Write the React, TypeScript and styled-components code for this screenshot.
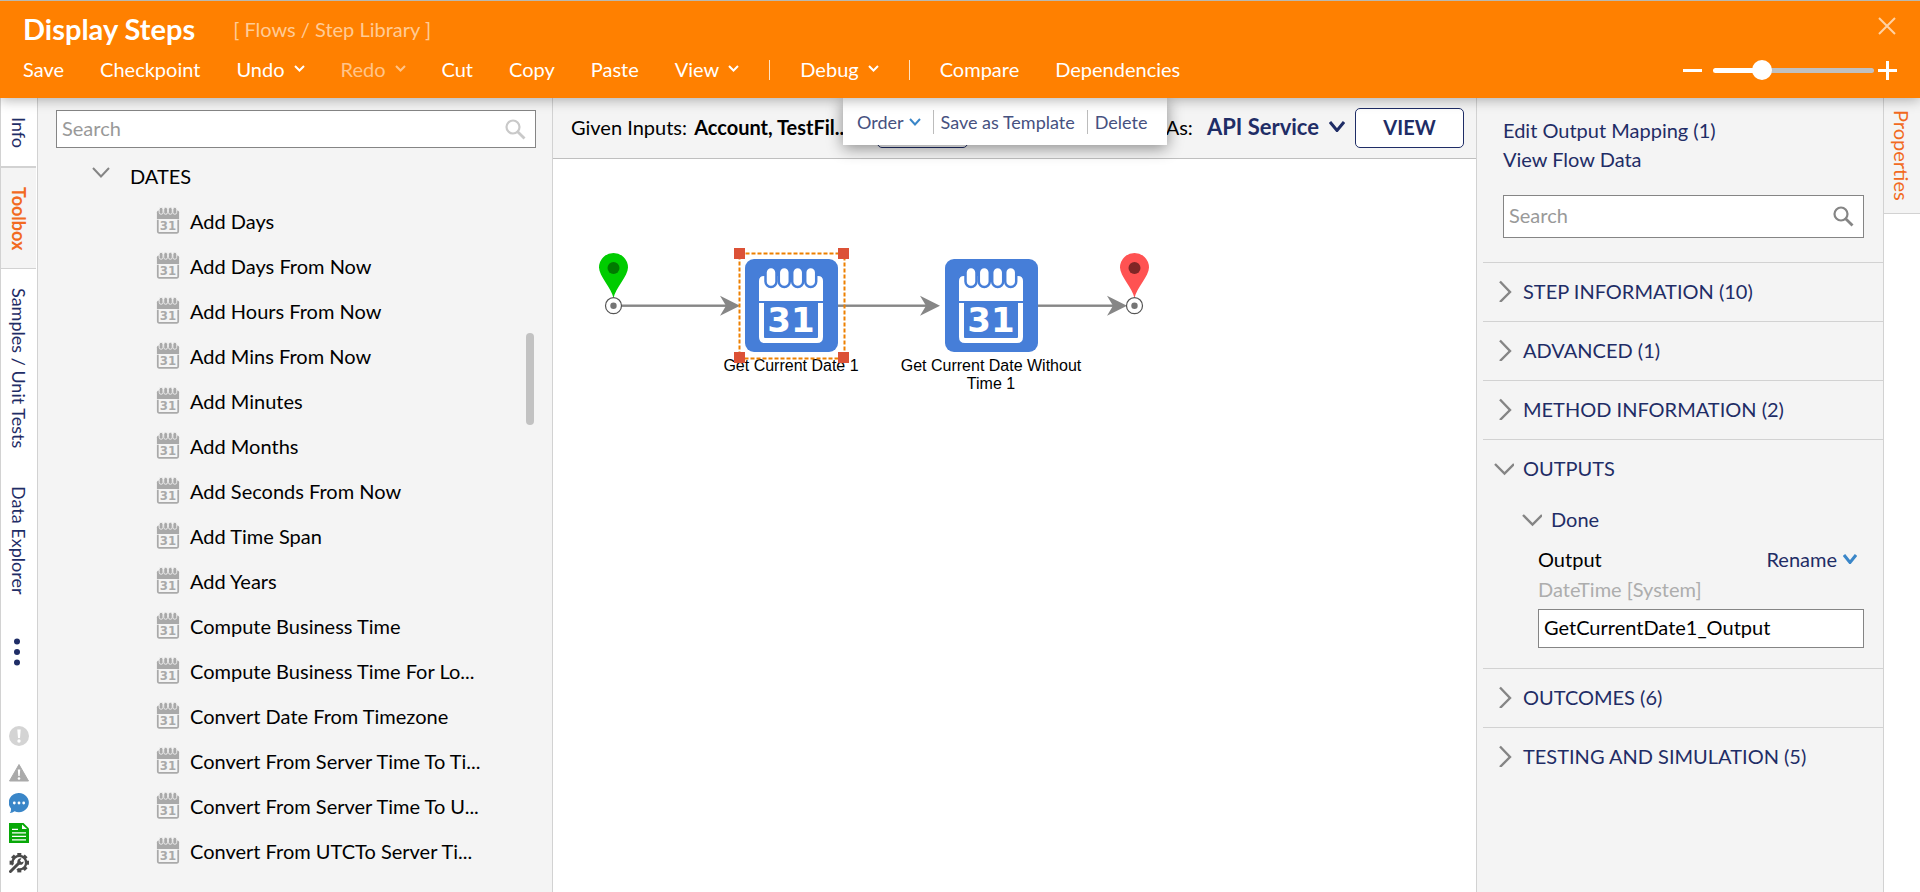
import React from "react";
import styled, { createGlobalStyle, css } from "styled-components";

const navy = "#1f2d66";
const orange = "#ff8000";
const accent = "#f26a21";
const panel = "#f4f4f4";
const line = "#d2d2d2";
const blue = "#3a86c8";
const iconGray = "#858585";

const GlobalStyle = createGlobalStyle`
  *, *::before, *::after { box-sizing: border-box; }
  body {
    margin: 0;
    background: #fff;
    color: #000;
    font: 20px/24px Lato, "Liberation Sans", sans-serif;
  }
  button, input { font: inherit; color: inherit; }
  button { background: none; border: 0; padding: 0; cursor: pointer; }
  a { color: inherit; text-decoration: none; }
  svg { display: block; flex: none; }
`;

const Page = styled.div`
  display: flex;
  flex-direction: column;
  min-height: 100vh;
`;

/* ---------- header ---------- */

const Header = styled.header`
  position: relative;
  z-index: 2;
  padding: 8px 22px 11px 23px;
  border-top: 1px solid #b9b9b0;
  background: ${orange};
  color: #fff;
  box-shadow: 0 2px 12px rgba(0, 0, 0, 0.3);
`;

const TitleRow = styled.div`
  display: flex;
  align-items: center;
  height: 44px;
  padding-bottom: 4px;
`;

const Title = styled.h1`
  margin: 0 38px 0 0;
  font-size: 29px;
  line-height: 34px;
  font-weight: 700;
`;

const Crumb = styled.span`
  color: #ffcb96;
`;

const CloseButton = styled.button`
  margin: 0 2px 6px auto;
`;

const MenuRow = styled.div`
  display: flex;
  align-items: center;
  justify-content: space-between;
  height: 34px;
`;

const Menu = styled.nav`
  display: flex;
  align-items: center;
  gap: 36px;
`;

const MenuButton = styled.button`
  display: flex;
  align-items: center;
  gap: 9px;
  padding-bottom: 3px;
  &:disabled {
    color: #ffc48a;
    cursor: default;
  }
`;

const MenuDivider = styled.span`
  width: 1px;
  height: 20px;
  margin: 0 -6px;
  background: #ffe2c4;
`;

const Zoom = styled.div`
  display: flex;
  align-items: center;
`;

const Range = styled.input`
  appearance: none;
  width: 161px;
  height: 20px;
  margin: 0 4px 0 10px;
  background: transparent;
  &::-webkit-slider-runnable-track {
    height: 5px;
    border-radius: 3px;
    background: linear-gradient(to right, #fff 31%, #c0c0c0 31%);
  }
  &::-webkit-slider-thumb {
    appearance: none;
    width: 20px;
    height: 20px;
    margin-top: -8px;
    border-radius: 50%;
    background: #fff;
  }
`;

/* ---------- body ---------- */

const Body = styled.div`
  display: flex;
  flex: 1;
`;

const Rail = styled.nav`
  display: flex;
  flex-direction: column;
  width: 38px;
  padding-right: 1px;
  border: solid ${line};
  border-width: 0 1px;
`;

const sideText = css`
  writing-mode: vertical-rl;
  text-align: left;
`;

const RailTab = styled.button<{ $active?: boolean; $rule?: number }>`
  ${sideText}
  width: 35px;
  padding: 19px 0 18px;
  font-size: 18px;
  line-height: 31px;
  color: ${(p) => (p.$active ? accent : navy)};
  font-weight: ${(p) => (p.$active ? 700 : 400)};
  background: ${(p) => (p.$active ? panel : "transparent")};
  border-bottom: ${(p) => p.$rule ?? 0}px solid ${line};
`;

const MoreButton = styled.button`
  margin: 26px 0 0 13px;
  align-self: flex-start;
`;

const StatusList = styled.div`
  display: flex;
  flex-direction: column;
  align-items: center;
  gap: 10px;
  margin-top: auto;
  padding-bottom: 19px;
  button:first-child { margin-bottom: 7px; }
`;

const Toolbox = styled.aside`
  position: relative;
  width: 515px;
  padding: 12px 16px 18px 18px;
  background: ${panel};
  border-right: 1px solid ${line};
`;

const SearchBox = styled.label<{ $tall?: boolean }>`
  display: flex;
  align-items: center;
  height: ${(p) => (p.$tall ? 43 : 38)}px;
  padding: 0 9px 0 5px;
  background: #fff;
  border: 1px solid ${iconGray};
  input {
    flex: 1;
    min-width: 0;
    padding: 0 0 3px;
    border: 0;
    outline: 0;
    background: transparent;
  }
  input::placeholder { color: #999; opacity: 1; }
`;

const CategoryButton = styled.button`
  display: flex;
  align-items: center;
  gap: 20px;
  height: 45px;
  margin: 5px 0 0 36px;
  svg { margin-bottom: 7px; }
`;

const StepList = styled.ul`
  margin: 0;
  padding: 0 0 0 100px;
  list-style: none;
`;

const StepButton = styled.button`
  display: flex;
  align-items: center;
  gap: 10px;
  height: 45px;
  white-space: nowrap;
`;

const ScrollThumb = styled.div`
  position: absolute;
  top: 235px;
  right: 18px;
  width: 8px;
  height: 92px;
  border-radius: 4px;
  background: #c2c2c2;
`;

/* ---------- designer ---------- */

const Designer = styled.main`
  display: flex;
  flex-direction: column;
  flex: 1;
  min-width: 0;
  position: relative;
`;

const FlowBar = styled.div`
  display: flex;
  align-items: center;
  height: 61px;
  padding: 0 12px 0 18px;
  background: ${panel};
  border-bottom: 1px solid #bfbfbf;
  white-space: nowrap;
`;

const Inputs = styled.div`
  flex: 0 0 306px;
  overflow: hidden;
  padding-bottom: 3px;
  strong { margin-left: 2px; }
`;

const OutlineButton = styled.button<{ $w: number }>`
  width: ${(p) => p.$w}px;
  height: 40px;
  padding-bottom: 3px;
  border: 1px solid ${navy};
  border-radius: 5px;
  background: #fff;
  color: ${navy};
  font-weight: 700;
`;

const RunAs = styled.div`
  display: flex;
  align-items: center;
  gap: 10px;
  margin-left: auto;
`;

const RunAsLabel = styled.span`
  padding-bottom: 3px;
`;

const RunAsButton = styled.button`
  display: flex;
  align-items: center;
  gap: 10px;
  margin-left: 4px;
  padding-bottom: 3px;
  color: ${navy};
  font-size: 22px;
  font-weight: 700;
`;

const StepMenu = styled.div`
  position: absolute;
  z-index: 1;
  top: 0;
  left: 290px;
  display: flex;
  align-items: center;
  width: 324px;
  height: 47px;
  padding: 0 14px;
  gap: 7px;
  background: #fff;
  color: #46517f;
  font-size: 18px;
  white-space: nowrap;
  box-shadow: 0 3px 16px rgba(0, 0, 0, 0.45);
`;

const StepMenuButton = styled.button`
  display: flex;
  align-items: center;
  gap: 5px;
`;

const StepMenuDivider = styled.span`
  width: 1px;
  height: 24px;
  margin-left: 5px;
  background: #bcbcbc;
`;

const Canvas = styled.div`
  position: relative;
  flex: 1;
  overflow: hidden;
  background: #fff;
`;

const Wires = styled.svg`
  position: absolute;
  top: 0;
  left: 0;
`;

const Node = styled.div<{ $x: number; $y: number }>`
  position: absolute;
  left: ${(p) => p.$x}px;
  top: ${(p) => p.$y}px;
  display: flex;
  flex-direction: column;
  align-items: center;
  gap: 5px;
  width: 200px;
  font: 16px/18px "Liberation Sans", Arial, sans-serif;
  text-align: center;
`;

const Selection = styled.svg`
  position: absolute;
  top: -11px;
  left: 43px;
`;

/* ---------- properties ---------- */

const Properties = styled.aside`
  width: 408px;
  padding: 18px 0 0 6px;
  background: ${panel};
  border: solid ${line};
  border-width: 0 1px;
  color: ${navy};
`;

const Links = styled.div`
  display: flex;
  flex-direction: column;
  align-items: flex-start;
  margin-left: 20px;
  line-height: 29px;
`;

const PropertySearch = styled.div`
  margin: 21px 19px 24px 20px;
`;

const Section = styled.section`
  border-top: 1px solid ${line};
`;

const SectionButton = styled.button`
  display: flex;
  align-items: center;
  gap: 9px;
  width: 100%;
  height: 58px;
  padding: 0 0 3px 11px;
`;

const GroupButton = styled(SectionButton)`
  height: 44px;
  padding-left: 39px;
`;

const Field = styled.div`
  display: flex;
  flex-direction: column;
  margin: 2px 19px 20px 55px;
`;

const FieldHead = styled.div`
  display: flex;
  justify-content: space-between;
  align-items: center;
  height: 30px;
  padding-right: 7px;
  label { color: #000; }
`;

const RenameButton = styled.button`
  display: flex;
  align-items: center;
  gap: 6px;
`;

const FieldType = styled.span`
  height: 35px;
  line-height: 31px;
  color: #adadad;
`;

const TextInput = styled.input`
  height: 39px;
  padding: 0 5px 3px;
  border: 1px solid ${iconGray};
  border-radius: 0;
  background: #fff;
  color: #000;
`;

const RightRail = styled.nav`
  width: 36px;
`;

const PropertiesTab = styled.button`
  ${sideText}
  width: 36px;
  padding: 12px 0;
  line-height: 34px;
  background: ${panel};
  color: ${accent};
  border-bottom: 1px solid ${line};
`;

/* ---------- icons ---------- */

const Chevron = ({ w = 11, h = 7, color = "currentColor", stroke = 2 }) => (
  <svg width={w} height={h} viewBox={`0 0 ${w} ${h}`} fill="none" stroke={color} strokeWidth={stroke}>
    <path d={`M1 1L${w / 2} ${h - 1.5}L${w - 1} 1`} />
  </svg>
);

const SectionChevron = ({ open }: { open?: boolean }) => (
  <svg width="20" height="22" viewBox="0 0 20 22" fill="none" stroke={iconGray} strokeWidth="2.4">
    <path d={open ? "M1 7L10.500 16.500L20 7" : "M6 1.500L16 12L6 22"} />
  </svg>
);

const SearchIcon = ({ color }: { color: string }) => (
  <svg width="21" height="21" viewBox="0 0 21 21" fill="none" stroke={color}>
    <circle cx="8" cy="8" r="6.500" strokeWidth="2.200" />
    <path d="M12.700 12.700L19.500 19.500" strokeWidth="2.800" />
  </svg>
);

const rings = [26, 39.3, 52.7, 65.7];

const CalendarArt = ({ ink, ground }: { ink: string; ground: string }) => (
  <>
    <path d="M14 42V22Q14 17 19 17H73Q78 17 78 22V42Z" fill={ink} />
    <path d="M16.500 44V78Q16.500 81.500 20 81.500H72Q75.500 81.500 75.500 78V44" fill="none" stroke={ink} strokeWidth="5" />
    {rings.map((x) => (
      <rect key={x} x={x - 5.5} y="8" width="11" height="20" rx="5.500" fill={ink} stroke={ground} strokeWidth="2.500" />
    ))}
    <text x="46" y="73" textAnchor="middle" fontFamily="DejaVu Sans, sans-serif" fontWeight="700" fontSize="34" fill={ink}>
      31
    </text>
  </>
);

const SmallCalendar = () => (
  <svg width="24" height="27" viewBox="12 7 68 78">
    <CalendarArt ink="#a9a9a9" ground={panel} />
  </svg>
);

const LargeCalendar = () => (
  <svg width="93" height="93" viewBox="0 0 93 93">
    <rect width="93" height="93" rx="9" fill="#467ed8" />
    <CalendarArt ink="#fff" ground="#467ed8" />
  </svg>
);

const Pin = ({ x, fill, core }: { x: number; fill: string; core: string }) => (
  <g>
    <path
      d={`M${x} 139C${x - 2} 129 ${x - 14.5} 117 ${x - 14.5} 108.500A14.500 14.500 0 0 1 ${x + 14.5} 108.500C${x + 14.5} 117 ${x + 2} 129 ${x} 139Z`}
      fill={fill}
    />
    <circle cx={x} cy="109" r="6" fill={core} />
    <circle cx={x} cy="146.700" r="8" fill="#fff" stroke="#555" strokeWidth="1.200" />
    <circle cx={x} cy="146.700" r="3.200" fill="#757575" />
  </g>
);

const Wire = ({ from, to }: { from: number; to: number }) => (
  <g fill="#868686">
    <rect x={from} y="145.500" width={to - from - 10} height="2.400" />
    <path d={`M${to} 146.700L${to - 20} 136.700L${to - 14} 146.700L${to - 20} 156.700Z`} />
  </g>
);

const steps = [
  "Add Days",
  "Add Days From Now",
  "Add Hours From Now",
  "Add Mins From Now",
  "Add Minutes",
  "Add Months",
  "Add Seconds From Now",
  "Add Time Span",
  "Add Years",
  "Compute Business Time",
  "Compute Business Time For Lo...",
  "Convert Date From Timezone",
  "Convert From Server Time To Ti...",
  "Convert From Server Time To U...",
  "Convert From UTCTo Server Ti...",
];

const Fold = ({ title }: { title: string }) => (
  <Section>
    <SectionButton>
      <SectionChevron />
      {title}
    </SectionButton>
  </Section>
);

const gearTeeth = [0, 45, 90, 135, 180, 225, 270, 315];

export default function App() {
  return (
    <Page>
      <GlobalStyle />
      <Header>
        <TitleRow>
          <Title>Display Steps</Title>
          <Crumb>[ Flows / Step Library ]</Crumb>
          <CloseButton aria-label="Close">
            <svg width="18" height="18" viewBox="0 0 18 18" stroke="#ffd2a4" strokeWidth="2">
              <path d="M1 1L17 17M17 1L1 17" />
            </svg>
          </CloseButton>
        </TitleRow>
        <MenuRow>
          <Menu>
            <MenuButton>Save</MenuButton>
            <MenuButton>Checkpoint</MenuButton>
            <MenuButton>Undo <Chevron /></MenuButton>
            <MenuButton disabled>Redo <Chevron /></MenuButton>
            <MenuButton>Cut</MenuButton>
            <MenuButton>Copy</MenuButton>
            <MenuButton>Paste</MenuButton>
            <MenuButton>View <Chevron /></MenuButton>
            <MenuDivider />
            <MenuButton>Debug <Chevron /></MenuButton>
            <MenuDivider />
            <MenuButton>Compare</MenuButton>
            <MenuButton>Dependencies</MenuButton>
          </Menu>
          <Zoom>
            <button aria-label="Zoom out">
              <svg width="20" height="20" viewBox="0 0 20 20" stroke="#fff" strokeWidth="3">
                <path d="M0 10.500H19" />
              </svg>
            </button>
            <Range type="range" min="0" max="100" defaultValue="28" aria-label="Zoom" />
            <button aria-label="Zoom in">
              <svg width="20" height="20" viewBox="0 0 20 20" stroke="#fff" strokeWidth="3">
                <path d="M0 10.500H19M9.500 1V20" />
              </svg>
            </button>
          </Zoom>
        </MenuRow>
      </Header>

      <Body>
        <Rail>
          <RailTab $rule={2}>Info</RailTab>
          <RailTab $active $rule={1}>Toolbox</RailTab>
          <RailTab>Samples / Unit Tests</RailTab>
          <RailTab>Data Explorer</RailTab>
          <MoreButton aria-label="More">
            <svg width="6" height="28" viewBox="0 0 6 28" fill={navy}>
              <circle cx="3" cy="3.500" r="3" />
              <circle cx="3" cy="14" r="3" />
              <circle cx="3" cy="24.500" r="3" />
            </svg>
          </MoreButton>
          <StatusList>
            <button aria-label="Errors">
              <svg width="20" height="20" viewBox="0 0 20 20">
                <circle cx="10" cy="10" r="10" fill="#d4d4d4" />
                <path d="M8.300 3.500H11.700L11 12H9Z" fill="#fff" />
                <circle cx="10" cy="15" r="1.700" fill="#fff" />
              </svg>
            </button>
            <button aria-label="Warnings">
              <svg width="20" height="20" viewBox="0 0 20 20">
                <path d="M10 1.500L19.500 18H0.500Z" fill="#aaa" stroke="#aaa" strokeLinejoin="round" />
                <path d="M8.800 6.500H11.200L10.700 13H9.300Z" fill="#fff" />
                <circle cx="10" cy="15.500" r="1.300" fill="#fff" />
              </svg>
            </button>
            <button aria-label="Comments">
              <svg width="20" height="20" viewBox="0 0 20 20">
                <path d="M10 0A10 9.600 0 1 1 5.600 18.300Q3.500 20 0.800 20Q2.300 18 2 15.600A10 9.600 0 0 1 10 0Z" fill={blue} />
                <g fill="#fff">
                  <circle cx="5.300" cy="10" r="1.400" />
                  <circle cx="10" cy="10" r="1.400" />
                  <circle cx="14.700" cy="10" r="1.400" />
                </g>
              </svg>
            </button>
            <button aria-label="Documentation">
              <svg width="20" height="20" viewBox="0 0 20 20">
                <path d="M0 0H14.500L20 5.500V20H0Z" fill="#08a808" />
                <path d="M13 1.500V6H18Z" fill="#fff" />
                <path d="M3 6.300H9M3 9.800H17M3 13.300H17M3 16.800H17" stroke="#fff" strokeWidth="1.300" />
              </svg>
            </button>
            <button aria-label="Settings">
              <svg width="20" height="20" viewBox="0 0 20 20">
                <g fill="#4a4a4a">
                  {gearTeeth.map((a) => (
                    <rect key={a} x="8.300" y="0" width="4" height="4" transform={`rotate(${a} 10.300 9.700)`} />
                  ))}
                </g>
                <circle cx="10.300" cy="9.700" r="6.800" fill="#fff" stroke="#4a4a4a" strokeWidth="2.300" />
                <path d="M1.500 18.500L9.500 10.500" stroke="#fff" strokeWidth="6" />
                <path d="M1.500 18.500L10 10" stroke="#4a4a4a" strokeWidth="3" strokeLinecap="round" />
                <path d="M12.500 5.500A3.200 3.200 0 1 0 14.700 8.500L12.300 9.200L11 7.600Z" fill="#4a4a4a" />
              </svg>
            </button>
          </StatusList>
        </Rail>

        <Toolbox>
          <SearchBox>
            <input type="text" placeholder="Search" aria-label="Search toolbox" />
            <SearchIcon color="#c9c9c9" />
          </SearchBox>
          <CategoryButton>
            <Chevron w={18} h={11} color={iconGray} />
            DATES
          </CategoryButton>
          <StepList>
            {steps.map((s) => (
              <li key={s}>
                <StepButton>
                  <SmallCalendar />
                  {s}
                </StepButton>
              </li>
            ))}
          </StepList>
          <ScrollThumb />
        </Toolbox>

        <Designer>
          <FlowBar>
            <Inputs>
              Given Inputs: <strong>Account, TestFil...</strong>
            </Inputs>
            <OutlineButton $w={91} aria-label="Edit inputs" />
            <RunAs>
              <RunAsLabel>As:</RunAsLabel>
              <RunAsButton>
                API Service
                <Chevron w={16} h={11} stroke={3} />
              </RunAsButton>
              <OutlineButton $w={109}>VIEW</OutlineButton>
            </RunAs>
          </FlowBar>
          <StepMenu>
            <StepMenuButton>
              Order <Chevron w={12} h={8} color={blue} />
            </StepMenuButton>
            <StepMenuDivider />
            <StepMenuButton>Save as Template</StepMenuButton>
            <StepMenuDivider />
            <StepMenuButton>Delete</StepMenuButton>
          </StepMenu>
          <Canvas>
            <Wires width="620" height="240" viewBox="0 0 620 240">
              <Wire from={68} to={187} />
              <Wire from={285} to={387} />
              <Wire from={485} to={574} />
              <Pin x={60.5} fill="#00cc00" core="#007a00" />
              <Pin x={581.5} fill="#ff5252" core="#7f2626" />
            </Wires>
            <Node $x={138} $y={100}>
              <LargeCalendar />
              <span>Get Current Date 1</span>
              <Selection width="116" height="116" viewBox="0 0 116 116">
                <rect x="5.500" y="5.500" width="105" height="105" fill="none" stroke="#ee8000" strokeWidth="2" strokeDasharray="4 2" />
                <g fill="#dc5136">
                  <rect width="11" height="11" />
                  <rect x="104" width="11" height="11" />
                  <rect y="104" width="11" height="11" />
                  <rect x="104" y="104" width="11" height="11" />
                </g>
              </Selection>
            </Node>
            <Node $x={338} $y={100}>
              <LargeCalendar />
              <span>Get Current Date Without Time 1</span>
            </Node>
          </Canvas>
        </Designer>

        <Properties>
          <Links>
            <a href="#mapping">Edit Output Mapping (1)</a>
            <a href="#data">View Flow Data</a>
          </Links>
          <PropertySearch>
            <SearchBox $tall>
              <input type="text" placeholder="Search" aria-label="Search properties" />
              <SearchIcon color={iconGray} />
            </SearchBox>
          </PropertySearch>
          <Fold title="STEP INFORMATION (10)" />
          <Fold title="ADVANCED (1)" />
          <Fold title="METHOD INFORMATION (2)" />
          <Section>
            <SectionButton>
              <SectionChevron open />
              OUTPUTS
            </SectionButton>
            <GroupButton>
              <SectionChevron open />
              Done
            </GroupButton>
            <Field>
              <FieldHead>
                <label htmlFor="output-name">Output</label>
                <RenameButton>
                  Rename <Chevron w={14} h={10} color={blue} stroke={3} />
                </RenameButton>
              </FieldHead>
              <FieldType>DateTime [System]</FieldType>
              <TextInput id="output-name" type="text" defaultValue="GetCurrentDate1_Output" />
            </Field>
          </Section>
          <Fold title="OUTCOMES (6)" />
          <Fold title="TESTING AND SIMULATION (5)" />
        </Properties>

        <RightRail>
          <PropertiesTab>Properties</PropertiesTab>
        </RightRail>
      </Body>
    </Page>
  );
}
